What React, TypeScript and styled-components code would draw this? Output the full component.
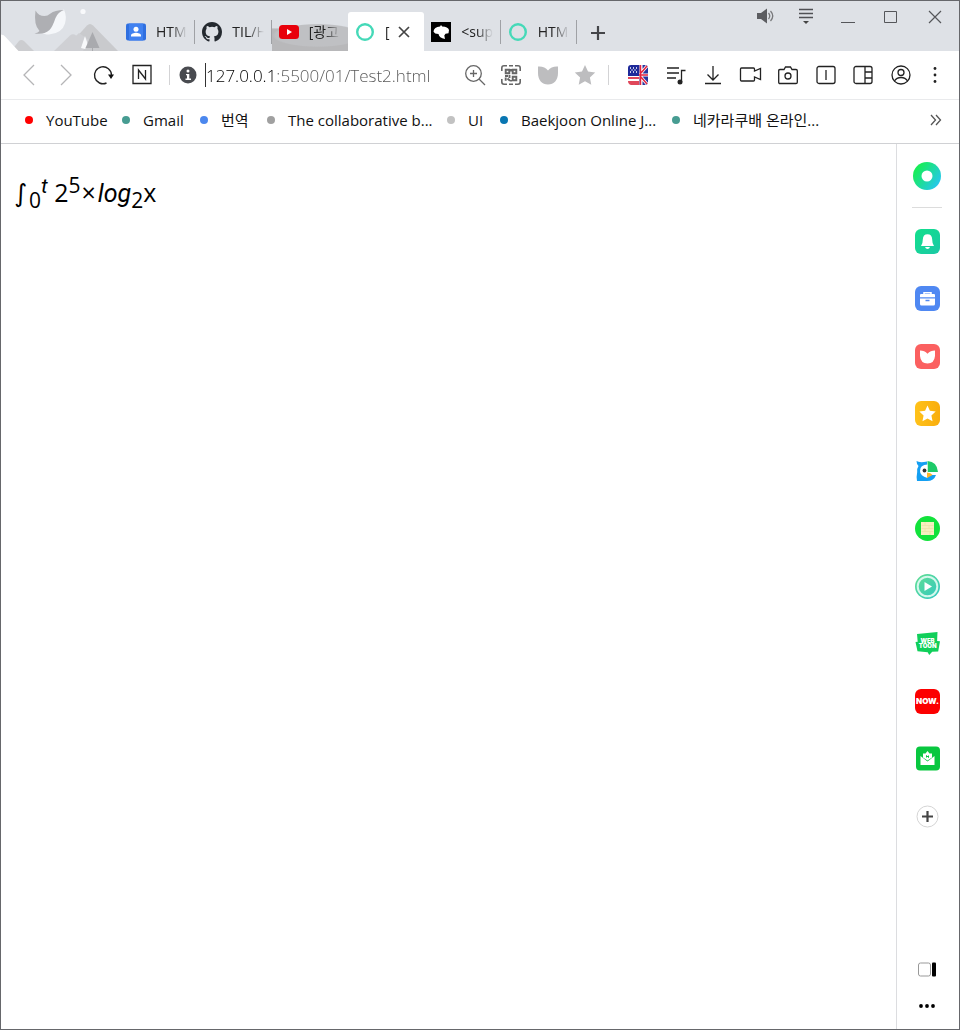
import React from "react";
import styled, { createGlobalStyle } from "styled-components";

const GlobalStyle = createGlobalStyle`
  * { box-sizing: border-box; }
  body { margin: 0; background: #fff; color: #111; font-family: "Open Sans", "Noto Sans CJK KR", sans-serif; }
  button, input { font: inherit; color: inherit; }
  svg { display: block; overflow: visible; }
`;

const Window = styled.div`
  display: flex;
  flex-direction: column;
  min-height: 100vh;
  border: 1px solid #66676b;
  background: #fff;
`;

const TitleBar = styled.header`
  display: flex;
  height: 50px;
  background: #dee1e6;
`;

const Scene = styled.div`
  flex: none;
  width: 118px;
  height: 50px;
`;

const Tabs = styled.div`
  display: flex;
  flex: none;
  width: 458px;
  padding-top: 11px;
`;

const Tab = styled.div<{ $active?: boolean; $marked?: boolean; $line?: boolean }>`
  position: relative;
  display: flex;
  flex: 1;
  min-width: 0;
  align-items: center;
  padding: 0 8px 0 7px;
  border-radius: 3px 3px 0 0;
  background: ${(p) =>
    p.$active
      ? "#fff"
      : p.$marked
        ? "radial-gradient(ellipse 60% 30% at 60% 60%, #bfc0c3 92%, transparent), linear-gradient(transparent 40%, #b8b8ba 44%)"
        : "transparent"};
  &::after {
    content: "";
    position: absolute;
    right: 0;
    top: 8px;
    width: 1px;
    height: 24px;
    background: ${(p) => (p.$line ? "#9fa1a5" : "transparent")};
  }
`;

const TabLink = styled.a`
  display: flex;
  flex: 1;
  min-width: 0;
  align-items: center;
  gap: 10px;
  color: #222;
  text-decoration: none;
  font-size: 14px;
  line-height: 20px;
  svg { flex: none; }
`;

const TabTitle = styled.span`
  flex: 1;
  min-width: 0;
  overflow: hidden;
  white-space: nowrap;
  mask-image: linear-gradient(to right, #000 50%, transparent);
`;

const IconButton = styled.button<{ $w?: number; $h?: number }>`
  display: flex;
  flex: none;
  align-items: center;
  justify-content: center;
  width: ${(p) => p.$w ?? 20}px;
  height: ${(p) => p.$h ?? 20}px;
  padding: 0;
  border: 0;
  background: none;
`;

const NewTab = styled(IconButton)`
  margin: 22px 0 0 11px;
`;

const WindowControls = styled.div`
  display: flex;
  width: 190px;
  justify-content: space-between;
  margin: 5px 16px 0 auto;
`;

const Toolbar = styled.div`
  display: flex;
  align-items: center;
  height: 49px;
  padding: 0 18px;
  border-bottom: 1px solid #e9eaec;
`;

const IconGroup = styled.div<{ $width: number }>`
  display: flex;
  flex: none;
  justify-content: space-between;
  width: ${(p) => p.$width}px;
`;

const Divider = styled.span<{ $before: number; $after: number }>`
  flex: none;
  width: 1px;
  height: 20px;
  margin: 0 ${(p) => p.$after}px 0 ${(p) => p.$before}px;
  background: #d3d3d5;
`;

const Address = styled.input`
  flex: 1;
  min-width: 0;
  height: 24px;
  margin: 0 20px 0 8px;
  padding: 0;
  border: 0;
  border-left: 1px solid #333;
  outline: 0;
  font-size: 17px;
  font-weight: 300;
  background: linear-gradient(to right, #000 68px, #555 68px);
  background-clip: text;
  -webkit-text-fill-color: transparent;
`;

const Menu = styled(IconButton)`
  margin-left: 18px;
`;

const Bookmarks = styled.nav`
  display: flex;
  align-items: center;
  height: 44px;
  padding: 0 12px 4px 24px;
  border-bottom: 1px solid #d0d1d4;
`;

const Bookmark = styled.a<{ $width: number }>`
  display: flex;
  flex: none;
  align-items: center;
  gap: 13px;
  width: ${(p) => p.$width}px;
  color: #111;
  font-size: 15px;
  line-height: 20px;
  white-space: nowrap;
  text-decoration: none;
`;

const Dot = styled.span<{ $color: string }>`
  flex: none;
  width: 8px;
  height: 8px;
  border-radius: 50%;
  background: ${(p) => p.$color};
`;

const More = styled(IconButton)`
  margin-left: auto;
`;

const Content = styled.div`
  display: flex;
  flex: 1;
`;

const Page = styled.main`
  flex: 1;
  padding: 28px 13px;
`;

const Formula = styled.p`
  margin: 0;
  color: #000;
  font-size: 25px;
  line-height: 40px;
  sup, sub { font-size: 21px; line-height: 0; }
  i { font-family: Roboto, sans-serif; }
`;

const Integral = styled.em`
  margin-right: 2px;
  font-family: "DejaVu Sans", sans-serif;
`;

const Times = styled.span`
  padding: 0 2px 0 1px;
`;

const Sidebar = styled.aside`
  display: flex;
  flex: none;
  flex-direction: column;
  align-items: center;
  width: 63px;
  padding: 18px 2px 13px 0;
  border-left: 1px solid #dcdde0;
`;

const SideRule = styled.hr`
  width: 30px;
  height: 1px;
  margin: 17px 0 20px;
  border: 0;
  background: #dcdcdc;
`;

const SideList = styled.nav`
  display: flex;
  flex-direction: column;
  justify-content: space-between;
  height: 601px;
`;

const SideBottom = styled.div`
  display: flex;
  flex-direction: column;
  gap: 17px;
  margin-top: auto;
`;

const tabs = [
  { title: "HTML", icon: "contact", line: true },
  { title: "TIL/HTML", icon: "github", line: true },
  { title: "[광고", icon: "youtube", marked: true },
  { title: "[", icon: "ring", active: true },
  { title: "<sup>", icon: "mdn", line: true },
  { title: "HTML", icon: "ring", line: true },
];

const bookmarks = [
  ["YouTube", "#f00", 97],
  ["Gmail", "#479c92", 78],
  ["번역", "#4b87ee", 67],
  ["The collaborative b...", "#a0a0a0", 180],
  ["UI", "#c2c2c2", 53],
  ["Baekjoon Online J...", "#0876b2", 172],
  ["네카라쿠배 온라인...", "#479c92", 160],
] as const;

const Favicon = ({ name }: { name: string }) => {
  if (name === "contact")
    return (
      <svg width="20" height="20" viewBox="0 0 20 20">
        <rect y="1.5" width="20" height="17" rx="2" fill="#2f6fe0" />
        <path d="M3 1.5h14v17H3z" fill="#4081f0" />
        <circle cx="10" cy="7.2" r="2.5" fill="#fff" />
        <path d="M5 14.5v-1c0-1.8 3-2.7 5-2.7s5 .9 5 2.7v1z" fill="#fff" />
      </svg>
    );
  if (name === "github")
    return (
      <svg width="20" height="20" viewBox="0 0 16 16">
        <path fill="#24292f" d="M8 0C3.58 0 0 3.58 0 8c0 3.54 2.29 6.53 5.47 7.59.4.07.55-.17.55-.38 0-.19-.01-.82-.01-1.49-2.01.37-2.53-.49-2.69-.94-.09-.23-.48-.94-.82-1.13-.28-.15-.68-.52-.01-.53.63-.01 1.08.58 1.23.82.72 1.21 1.87.87 2.33.66.07-.52.28-.87.51-1.07-1.78-.2-3.64-.89-3.64-3.95 0-.87.31-1.59.82-2.15-.08-.2-.36-1.02.08-2.12 0 0 .67-.21 2.2.82a7.6 7.6 0 0 1 4 0c1.53-1.04 2.2-.82 2.2-.82.44 1.1.16 1.92.08 2.12.51.56.82 1.27.82 2.15 0 3.07-1.87 3.75-3.65 3.95.29.25.54.73.54 1.48 0 1.07-.01 1.93-.01 2.2 0 .21.15.46.55.38A8 8 0 0 0 16 8c0-4.42-3.58-8-8-8z" />
      </svg>
    );
  if (name === "youtube")
    return (
      <svg width="20" height="20" viewBox="0 0 20 20">
        <rect y="3" width="20" height="14" rx="3.5" fill="#e8000b" />
        <path d="M8 7l5 3-5 3z" fill="#fff" />
      </svg>
    );
  if (name === "mdn")
    return (
      <svg width="20" height="20" viewBox="0 0 20 20">
        <path d="M0 0h20v20H0z" fill="#000" />
        <path d="M2.500 9.500Q3 5 9 4.500L10 3l1.200 1.400Q17 4.500 18 8l-.5 3.300-3 .5-1.200 1.700.7 3.500Q8 16 7.500 12 3.500 12 2.500 9.500z" fill="#fff" />
      </svg>
    );
  return (
    <svg width="20" height="20" viewBox="0 0 20 20">
      <circle cx="10" cy="10" r="7.800" fill="none" stroke="#45d9b8" strokeWidth="2.400" />
    </svg>
  );
};

const line = { fill: "none", stroke: "#222", strokeWidth: 1.3 };

const Mountain = () => (
  <svg width="118" height="50" viewBox="1 1 118 50">
    <path d="M54 51 70 35.500q3-2.500 6 0l8 15.500z" fill="#cfd0d4" />
    <path d="M64 51 87 25.500q3-3 6 0L118 51z" fill="#c9cacd" />
    <path d="M60 51 79 33l10 7-6 11z" fill="#cfd0d4" />
    <path d="M11 51 19 41q2-2 5 0l10 10z" fill="#cccdd0" />
    <path d="M1 34.500q3 0 5 3L18.500 51H1z" fill="#fff" />
    <path d="M85 36l3 9-3 4-4-1z" fill="#f8f9fb" />
    <path d="M92.500 32 99.500 48h-14z" fill="#a9aaae" />
    <path d="M92.500 47v4" stroke="#a9aaae" />
    <circle cx="83" cy="11.500" r="2.600" fill="#f8f9fb" />
    <path d="M57 13q3-3 7-3.500 3 7 1 14-3 10-16 11-5 0-7-2 9-3 11-12 1-5 4-7.500z" fill="#f5f7fa" />
    <path d="M35.500 10.500q3 5.500 9 5.500 3 0 6-2.500 4-3.500 13.500-3.500-6 2-8.500 8-3 9-6 12-6 5-15 3.500 4-1 5-2.500-6-6-4-20.500z" fill="#aeafb3" />
  </svg>
);

const Back = () => <svg width="20" height="20"><path d="M15 0 5 10l10 10" fill="none" stroke="#b5b5b7" strokeWidth="1.300" /></svg>;
const Forward = () => <svg width="20" height="20"><path d="m4 0 10 10L4 20" fill="none" stroke="#b5b5b7" strokeWidth="1.300" /></svg>;
const Reload = () => (
  <svg width="20" height="20" {...line}>
    <path d="M12.500 18A8.500 8.500 0 1 1 17.500 10" strokeWidth="1.400" />
    <path d="M14 9.500h6l-3 4.500z" fill="#111" stroke="none" />
  </svg>
);
const NBox = () => (
  <svg width="20" height="20" {...line}>
    <path d="M1 .5h18v18H1zM6.500 14V5l7 9V5" />
  </svg>
);
const Info = () => (
  <svg width="18" height="18">
    <circle cx="9" cy="9" r="8.500" fill="#494b50" />
    <circle cx="9" cy="5" r="1.500" fill="#fff" />
    <path d="M7 8h3.300v4.500H12V14H6.500v-1.500H8V9.300H7z" fill="#fff" />
  </svg>
);
const Magnify = () => (
  <svg width="20" height="20" fill="none" stroke="#666" strokeWidth="1.300">
    <circle cx="8.500" cy="8.500" r="7.800" />
    <path d="m14 14 6 6M8.500 5v7M5 8.500h7" />
  </svg>
);
const Qr = () => (
  <svg width="20" height="20" viewBox="1 0 20 20" fill="none" stroke="#666" strokeWidth="1.600">
    <path d="M.8 6V3Q.8.8 3 .8h3M14 .8h3q2.200 0 2.200 2.200v3M19.200 14v3q0 2.200-2.200 2.200h-3M6 19.200H3Q.8 19.200.8 17v-3M8 .8h4M8 19.200h4" />
    <path strokeWidth="1.900" d="M4.700 4.700h3.600v3.600H4.700zM11.700 4.700h3.600v3.600h-3.600zM11.700 11.700h3.600v3.600h-3.600zM4 11h3M8.500 10v3M4.700 12.500v3.300M6.500 13.500l2.500 2.300M10 4v2.500M10 15v1.500" />
  </svg>
);
const Tulip = () => <svg width="20" height="20"><path d="M0 1.500q6.500-.5 10 4 3.500-4.500 10-4V8c0 7-4 11.500-10 11.500S0 15 0 8z" fill="#bdbdbf" /></svg>;
const starPath = "M10 0l3 6.600 7.200.9-5.300 5 1.400 7.200L10 16.200 3.700 19.700l1.400-7.200-5.300-5L7 6.600z";
const Star = () => <svg width="20" height="20"><path d={starPath} fill="#bdbdbf" /></svg>;
const Flag = () => (
  <svg width="20" height="20">
    <rect width="20" height="20" rx="3" fill="#fff" />
    <path d="M0 12h11v2H0zM0 16h11v4H3q-3-1-3-4" fill="#e0475a" />
    <path d="M3 0h8v11H0V3q0-3 3-3z" fill="#1e2a9a" />
    <path d="M2 3h1m2 0h1m2 0h1M3.500 5h1m2 0h1M2 7h1m2 0h1m2 0h1" stroke="#fff" strokeWidth="1.500" />
    <path d="M11 0h6q3 0 3 3v14q0 3-3 3h-6z" fill="#26349d" />
    <path d="m13 8 6-7M13 12l6 7M11 10h9M13 0v20" stroke="#fff" strokeWidth="3" />
    <path d="m13 8 6-7M13 12l6 7M11 10h9M12.500 0v20" stroke="#e2233e" strokeWidth="1.500" />
  </svg>
);
const Music = () => (
  <svg width="20" height="20" {...line}>
    <path d="M1 3h12M1 8h12M1 13h9M15.500 17V5.500h4" />
    <circle cx="14" cy="17" r="2.500" fill="#222" stroke="none" />
  </svg>
);
const Download = () => <svg width="20" height="20" {...line}><path d="M10 1v14M4.500 9.500 10 15l5.500-5.500M2 18.500h16" /></svg>;
const Video = () => <svg width="22" height="20" {...line}><path d="M1.500 3h12q1 0 1 1v2l6-2.500v11L14.500 12v3q0 1-1 1h-12q-1 0-1-1V4q0-1 1-1z" /></svg>;
const Camera = () => (
  <svg width="20" height="20" {...line}>
    <path d="M2 4.500h4L7.500 2h5L14 4.500h4q1.300 0 1.300 1.300v11.400q0 1.300-1.300 1.300H2q-1.300 0-1.300-1.300V5.800Q.7 4.500 2 4.500z" />
    <circle cx="10" cy="11" r="3" />
  </svg>
);
const Split = () => <svg width="20" height="20" {...line}><rect x="1" y="1.500" width="18" height="17" rx="2" /><path d="M10 5v10" /></svg>;
const Panels = () => <svg width="20" height="20" {...line}><rect x="1" y="1.500" width="18" height="17" rx="2" /><path d="M12 1.500v17M12 7h7M12 13h7" /></svg>;
const User = () => (
  <svg width="20" height="20" {...line}>
    <circle cx="10" cy="10" r="9" /><circle cx="10" cy="7.500" r="3" /><path d="M3.500 16q2-3.500 6.500-3.500t6.500 3.500" />
  </svg>
);
const Kebab = () => <svg width="12" height="20" fill="#222"><circle cx="6" cy="3.500" r="1.400" /><circle cx="6" cy="10" r="1.400" /><circle cx="6" cy="16.500" r="1.400" /></svg>;

const badge = { fill: "#fff", textAnchor: "middle", fontFamily: "Inter, sans-serif", fontWeight: 900 } as const;

const SideIcon = ({ name }: { name: string }) => {
  const tile = { width: 25, height: 25, rx: 6 };
  return (
    <svg width="25" height="25" viewBox="0 0 25 25">
      <defs>
        <linearGradient id="bell" x2="1" y2="1"><stop stopColor="#12e08b" /><stop offset="1" stopColor="#1bc8a6" /></linearGradient>
        <linearGradient id="sun" x2="1"><stop stopColor="#ffc21a" /><stop offset="1" stopColor="#f9ad0d" /></linearGradient>
        <linearGradient id="play" y2="1" x2="1"><stop stopColor="#62df91" /><stop offset="1" stopColor="#31c7c3" /></linearGradient>
      </defs>
      {name === "Notifications" && <><rect {...tile} fill="url(#bell)" /><path d="M6 17q1.800-2 1.800-6.500Q8 5.300 12.500 5.300t4.700 5.200Q17.200 15 19 17z" fill="#fff" /><path d="M10 18h5q-.8 2-2.500 2T10 18z" fill="#fff" /></>}
      {name === "Toolbox" && <><rect {...tile} fill="#4f88f2" /><path d="M9 8V6.700h7V8" fill="none" stroke="#fff" strokeWidth="1.500" /><path d="M6 8h13q1 0 1 1v2.300H5V9q0-1 1-1zM5 12.500h15V18q0 1.500-1.500 1.500h-12Q5 19.500 5 18z" fill="#fff" /><path d="M10.500 14.500h4" stroke="#4f88f2" strokeWidth="1.500" /></>}
      {name === "Keep" && <><rect {...tile} fill="#fb6060" /><path d="M5 6.500q4.500 0 7.500 3.200 3-3.200 7.500-3.200V12q-.7 7.500-7.500 7.500T5 12z" fill="#fff" /></>}
      {name === "Favorites" && <><rect {...tile} fill="url(#sun)" /><path d={starPath} transform="translate(4.500 4.500) scale(.8)" fill="#fff" /></>}
      {name === "Papago" && <><path d="M1.500 2q3 2 10.500.500V16h9q-2 6-9 6H2q-.8-4 .2-9-.7-3 1.300-6Q1.500 5 1.500 2z" fill="#149ff2" /><path d="M12.500 2q9.500.5 10.500 11H12.500z" fill="#1dca69" /><path d="M12.500 5.500Q5 5.500 5 12q0 5 7.500 7z" fill="#fff" /><circle cx="9.500" cy="11.500" r="1.900" fill="#333" /><path d="M12 13.500q4 .2 5.500 2.500l-5.500 3z" fill="#ffb529" /></>}
      {name === "Square" && <><circle cx="12.500" cy="12.500" r="12.500" fill="#12e23b" /><path d="M6 6h13v13H6z" fill="#f6efc0" /><path d="M6.500 9.500h12m-12 3h12m-12 3h12M10 6v3m4 0v3.500m-4 0V16m5 0v3" stroke="#ece3a8" strokeWidth=".8" /></>}
      {name === "Player" && <><circle cx="12.500" cy="12.500" r="12.500" fill="url(#play)" /><circle cx="12.500" cy="12.500" r="9.800" fill="none" stroke="#d4f8ec" strokeWidth="2" /><path d="M9.500 8 17 12.500l-7.500 4.500z" fill="#fff" /></>}
      {name === "Webtoon" && <><path d="M2 3 22.500 1l-.4 9 2.900.2-1.800 10.300-6 .3-3 3.200-1.500-2.700-10.200-1L.5 11l2.200-.3z" fill="#10cf5a" /><text {...badge} x="12.500" y="11.500" fontSize="6">WEB</text><text {...badge} x="12.700" y="17" fontSize="6">TOON</text></>}
      {name === "Now" && <><rect {...tile} fill="#fc0000" /><text {...badge} x="12.500" y="15.300" fontSize="8">NOW.</text></>}
      {name === "Mail" && <><rect x="1" y=".5" width="24" height="24" rx="4" fill="#08c73f" /><path d="M5.500 10 12.500 15.500 19.500 10v9h-14z" fill="#fff" /><path d="M8 7.500h2.500L12.500 5l2 2.500H17v4l-4.500 3-4.500-3z" fill="#fff" /><path d="M11.500 11.500v-2l2 2v-2" fill="none" stroke="#08c73f" /></>}
      {name === "Add" && <><circle cx="12.500" cy="12.500" r="10.500" fill="#fff" stroke="#d5d5d5" /><path d="M12.500 7v11M7 12.500h11" stroke="#444" strokeWidth="2.200" /></>}
    </svg>
  );
};

const sideNames = ["Notifications", "Toolbox", "Keep", "Favorites", "Papago", "Square", "Player", "Webtoon", "Now", "Mail", "Add"];

export default function App() {
  return (
    <Window>
      <GlobalStyle />
      <TitleBar>
        <Scene><Mountain /></Scene>
        <Tabs>
          {tabs.map((t, i) => (
            <Tab key={i} $active={t.active} $marked={t.marked} $line={t.line}>
              <TabLink href="#"><Favicon name={t.icon} /><TabTitle>{t.title}</TabTitle></TabLink>
              {t.active && (
                <IconButton aria-label="Close tab" $w={24}>
                  <svg width="12" height="12"><path d="m1 1 10 10M11 1 1 11" stroke="#444" strokeWidth="1.700" /></svg>
                </IconButton>
              )}
            </Tab>
          ))}
        </Tabs>
        <NewTab aria-label="New tab">
          <svg width="16" height="16"><path d="M8 1v14M1 8h14" stroke="#444549" strokeWidth="2.200" /></svg>
        </NewTab>
        <WindowControls>
          <IconButton aria-label="Sound">
            <svg width="20" height="20" fill="none" stroke="#77787b"><path d="M4 7h4l6-4.500v15L8 13H4z" fill="#5c5d61" stroke="none" /><path d="M15.500 7q2.500 3 0 6M17.500 5q4.500 5 0 10" strokeWidth="1.300" /></svg>
          </IconButton>
          <IconButton aria-label="Tab list">
            <svg width="20" height="20"><path d="M3 3.500h14M3 7.500h14M3 11.500h14" stroke="#505155" strokeWidth="1.300" /><path d="M7 15h6l-3 3z" fill="#444" /></svg>
          </IconButton>
          <IconButton aria-label="Minimize">
            <svg width="20" height="20"><path d="M3 16.500h14" stroke="#55565a" /></svg>
          </IconButton>
          <IconButton aria-label="Maximize">
            <svg width="20" height="20"><path d="M3.500 5.500h12v11h-12z" fill="none" stroke="#55565a" /></svg>
          </IconButton>
          <IconButton aria-label="Close">
            <svg width="20" height="20"><path d="m6 5 12 12M18 5 6 17" stroke="#55565a" strokeWidth="1.200" /></svg>
          </IconButton>
        </WindowControls>
      </TitleBar>

      <Toolbar>
        <IconGroup $width={133}>
          <IconButton aria-label="Back"><Back /></IconButton>
          <IconButton aria-label="Forward"><Forward /></IconButton>
          <IconButton aria-label="Reload"><Reload /></IconButton>
          <IconButton aria-label="Home"><NBox /></IconButton>
        </IconGroup>
        <Divider $before={17} $after={9} />
        <IconButton aria-label="Site information" $w={18}><Info /></IconButton>
        <Address aria-label="Address" defaultValue="127.0.0.1:5500/01/Test2.html" />
        <IconGroup $width={130}>
          <IconButton aria-label="Zoom"><Magnify /></IconButton>
          <IconButton aria-label="QR code"><Qr /></IconButton>
          <IconButton aria-label="Keep"><Tulip /></IconButton>
          <IconButton aria-label="Bookmark"><Star /></IconButton>
        </IconGroup>
        <Divider $before={13} $after={19} />
        <IconGroup $width={283}>
          <IconButton aria-label="Translate"><Flag /></IconButton>
          <IconButton aria-label="Music"><Music /></IconButton>
          <IconButton aria-label="Downloads"><Download /></IconButton>
          <IconButton aria-label="Record"><Video /></IconButton>
          <IconButton aria-label="Capture"><Camera /></IconButton>
          <IconButton aria-label="Split view"><Split /></IconButton>
          <IconButton aria-label="Side panel"><Panels /></IconButton>
          <IconButton aria-label="Profile"><User /></IconButton>
        </IconGroup>
        <Menu aria-label="Menu" $w={12}><Kebab /></Menu>
      </Toolbar>

      <Bookmarks aria-label="Bookmarks">
        {bookmarks.map(([label, color, width]) => (
          <Bookmark href="#" key={label} $width={width}><Dot $color={color} />{label}</Bookmark>
        ))}
        <More aria-label="More bookmarks" $w={22}>
          <svg width="12" height="10"><path d="m1 0 4.500 5L1 10M6 0l4.500 5L6 10" fill="none" stroke="#555" strokeWidth="1.300" /></svg>
        </More>
      </Bookmarks>

      <Content>
        <Page>
          <Formula>
            <Integral>∫</Integral><sub>0</sub><sup><i>t</i></sup> 2<sup>5</sup><Times>×</Times><i>log</i><sub>2</sub>x
          </Formula>
        </Page>
        <Sidebar>
          <IconButton aria-label="Whale" $w={28} $h={28}>
            <svg width="28" height="28">
              <defs><linearGradient id="whale" x2="1" y2=".7"><stop offset=".2" stopColor="#18ed58" /><stop offset="1" stopColor="#25c7ef" /></linearGradient></defs>
              <circle cx="14" cy="14" r="14" fill="url(#whale)" /><circle cx="14" cy="14" r="5.500" fill="#fff" />
            </svg>
          </IconButton>
          <SideRule />
          <SideList aria-label="Sidebar apps">
            {sideNames.map((n) => <IconButton key={n} aria-label={n} $w={26} $h={26}><SideIcon name={n} /></IconButton>)}
          </SideList>
          <SideBottom>
            <IconButton aria-label="Toggle sidebar">
              <svg width="20" height="20"><rect x="1.500" y="4" width="12" height="13" rx="2" fill="#fff" stroke="#999" /><rect x="15" y="3.500" width="4" height="14" rx="1" fill="#000" /></svg>
            </IconButton>
            <IconButton aria-label="More">
              <svg width="20" height="20"><circle cx="4" cy="10" r="1.900" /><circle cx="10" cy="10" r="1.900" /><circle cx="16" cy="10" r="1.900" /></svg>
            </IconButton>
          </SideBottom>
        </Sidebar>
      </Content>
    </Window>
  );
}
